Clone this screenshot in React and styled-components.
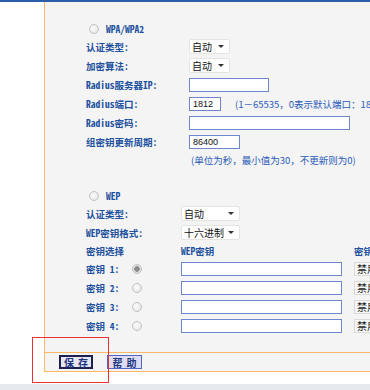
import React from 'react';
import styled, { createGlobalStyle } from 'styled-components';

const GlobalStyle = createGlobalStyle`
  html, body { margin: 0; padding: 0; background: #fff; overflow: hidden; }
  body { font-family: "Noto Sans Mono CJK SC", "Noto Sans CJK SC", sans-serif; }
`;

const Page = styled.div`
  position: relative;
  width: 370px;
  height: 390px;
  display: flex;
  flex-direction: column;
  overflow: hidden;
`;

const TopLine = styled.div`
  height: 2px;
  background: #2a5ea8;
`;

const Main = styled.div`
  display: flex;
`;

const Gutter = styled.div`
  width: 44px;
  flex: none;
`;

const Panel = styled.div`
  flex: 1;
  min-width: 0;
  background: #f4f4f4;
  border-left: 1px solid #ffb866;
  border-bottom: 1px solid #ffb866;
`;

const Form = styled.div`
  padding: 18px 0 17px 41px;
  white-space: nowrap;
`;

const RadioRow = styled.div`
  height: ${p => p.$h}px;
  margin-top: ${p => p.$mt || 0}px;
  display: flex;
  align-items: center;
  gap: 7px;
  padding-left: 3px;
`;

const Radio = styled.span`
  display: inline-block;
  width: 10px;
  height: 10px;
  box-sizing: border-box;
  border-radius: 50%;
  border: 1px solid #c2c2c2;
  background: ${p => p.$checked
    ? 'radial-gradient(circle, #8c8c8c 0 2.5px, #dcdcdc 3px, #f2f2f2 100%)'
    : 'radial-gradient(circle at 40% 40%, #fbfbfb, #e2e2e2)'};
`;

const Row = styled.div`
  display: grid;
  grid-template-columns: ${p => p.$cols};
  height: ${p => p.$h || 19}px;
  align-items: center;
`;

const Label = styled.span`
  font-size: 9.5px;
  font-weight: 700;
  color: #21509e;
  grid-column: ${p => p.$span ? `span ${p.$span}` : 'auto'};
`;

const Cell = styled.div`
  display: flex;
  align-items: center;
`;

const Hint = styled.span`
  font-family: "Noto Sans CJK SC", sans-serif;
  font-size: 9.5px;
  color: #2a5bb8;
  margin-left: ${p => p.$ml || 0}px;
`;

const Select = styled.div`
  width: ${p => p.$w}px;
  height: 15px;
  box-sizing: border-box;
  background: #fff;
  border: 1px solid #e4e4e4;
  border-radius: 2px;
  display: flex;
  align-items: center;
  justify-content: space-between;
  padding: 0 5px 0 2px;
  font-family: "Noto Sans CJK SC", sans-serif;
  font-size: 10px;
  color: #111;
`;

const Caret = styled.span`
  width: 0;
  height: 0;
  border-left: 3px solid transparent;
  border-right: 3px solid transparent;
  border-top: 3px solid #333;
`;

const Input = styled.input`
  width: ${p => p.$w}px;
  height: 14px;
  box-sizing: border-box;
  margin: 0;
  padding: 0 3px;
  border: 1px solid #6d86cc;
  background: #fff;
  font-family: "Liberation Sans", sans-serif;
  font-size: 9px;
  color: #111;
  outline: none;
`;

const SmallButton = styled.div`
  width: 30px;
  height: 14px;
  box-sizing: border-box;
  background: #f7f7f7;
  border: 1px solid #dadada;
  font-family: "Noto Sans CJK SC", sans-serif;
  font-size: 10px;
  line-height: 12px;
  padding-left: 2px;
  color: #222;
`;

const ButtonBar = styled.div`
  border-top: 1px solid #ffb866;
  height: 19px;
  box-sizing: border-box;
  padding: 2px 0 0 14px;
  display: flex;
  gap: 14px;
  align-items: flex-start;
`;

const Button = styled.div`
  width: ${p => p.$primary ? 34 : 35}px;
  height: 14px;
  box-sizing: border-box;
  background: ${p => p.$primary ? '#e6e6f2' : '#dcdcf2'};
  border: ${p => p.$primary ? '2px solid #1c2150' : '1px solid #5466c4'};
  display: flex;
  align-items: center;
  justify-content: center;
  gap: 4px;
  white-space: nowrap;
  font-size: 10px;
  font-weight: 700;
  color: #1f3580;
`;

const Spacer = styled.div`
  height: 12px;
`;

const Footer = styled.div`
  flex: 1;
  background: #e6eaef;
`;

const Annotation = styled.div`
  position: absolute;
  left: 32px;
  top: 337px;
  width: 77px;
  height: 46px;
  box-sizing: border-box;
  border: 1px solid #e83232;
`;

const SelectField = ({ w, value }) => (
  <Select $w={w}>
    <span>{value}</span>
    <Caret />
  </Select>
);

const WPA = '103px auto';
const WEP = '95px auto';
const KEYS = '46px 49px 173px auto';

export default function App() {
  return (
    <Page>
      <GlobalStyle />
      <TopLine />
      <Main>
        <Gutter />
        <Panel>
          <Form>
            <RadioRow $h={17}>
              <Radio />
              <Label>WPA/WPA2</Label>
            </RadioRow>
            <Row $cols={WPA}>
              <Label>认证类型:</Label>
              <Cell><SelectField w={41} value="自动" /></Cell>
            </Row>
            <Row $cols={WPA}>
              <Label>加密算法:</Label>
              <Cell><SelectField w={41} value="自动" /></Cell>
            </Row>
            <Row $cols={WPA}>
              <Label>Radius服务器IP:</Label>
              <Cell><Input $w={80} readOnly defaultValue="" /></Cell>
            </Row>
            <Row $cols={WPA}>
              <Label>Radius端口:</Label>
              <Cell>
                <Input $w={32} readOnly defaultValue="1812" />
                <Hint $ml={14}>(1－65535，0表示默认端口：1812)</Hint>
              </Cell>
            </Row>
            <Row $cols={WPA}>
              <Label>Radius密码:</Label>
              <Cell><Input $w={161} readOnly defaultValue="" /></Cell>
            </Row>
            <Row $cols={WPA}>
              <Label>组密钥更新周期:</Label>
              <Cell><Input $w={51} readOnly defaultValue="86400" /></Cell>
            </Row>
            <Row $cols={WPA} $h={18}>
              <span />
              <Cell><Hint $ml={2}>(单位为秒，最小值为30，不更新则为0)</Hint></Cell>
            </Row>

            <RadioRow $h={16} $mt={19}>
              <Radio />
              <Label>WEP</Label>
            </RadioRow>
            <Row $cols={WEP}>
              <Label>认证类型:</Label>
              <Cell><SelectField w={59} value="自动" /></Cell>
            </Row>
            <Row $cols={WEP}>
              <Label>WEP密钥格式:</Label>
              <Cell><SelectField w={59} value="十六进制" /></Cell>
            </Row>
            <Row $cols={KEYS} $h={17}>
              <Label $span={2}>密钥选择</Label>
              <Label>WEP密钥</Label>
              <Label>密钥类型</Label>
            </Row>
            {[1, 2, 3, 4].map(n => (
              <Row key={n} $cols={KEYS}>
                <Label>密钥 {n}:</Label>
                <Cell><Radio $checked={n === 1} /></Cell>
                <Cell><Input $w={161} readOnly defaultValue="" /></Cell>
                <Cell><SmallButton>禁用</SmallButton></Cell>
              </Row>
            ))}
          </Form>
          <ButtonBar>
            <Button $primary><span>保</span><span>存</span></Button>
            <Button><span>帮</span><span>助</span></Button>
          </ButtonBar>
        </Panel>
      </Main>
      <Spacer />
      <Footer />
      <Annotation />
    </Page>
  );
}
